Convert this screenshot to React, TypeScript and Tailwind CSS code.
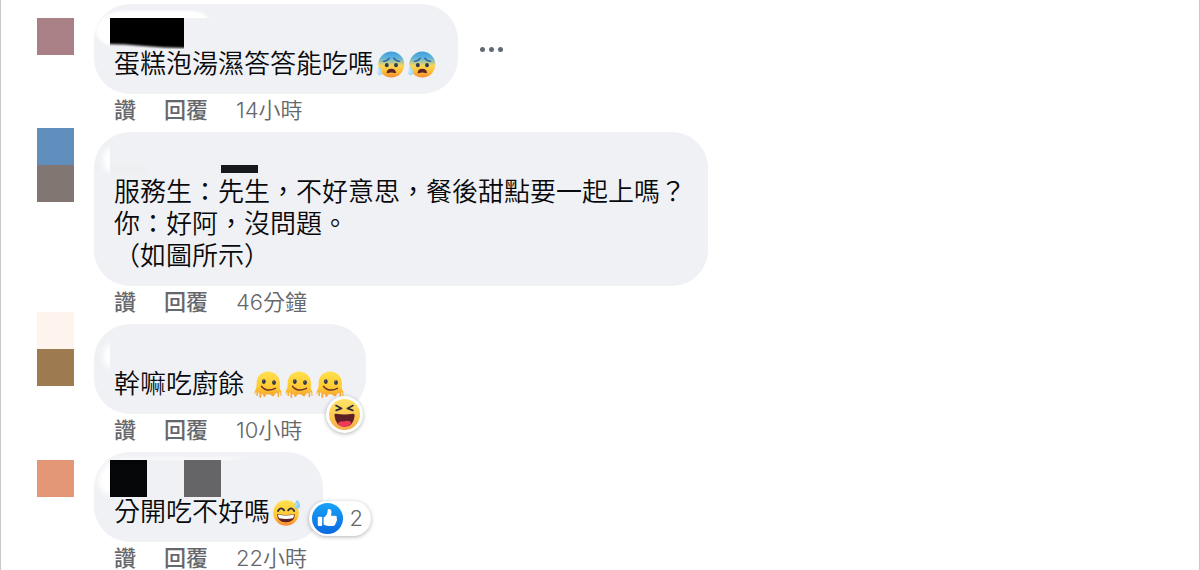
import type { ReactNode } from 'react'

function AnxiousFace() {
  return (
    <svg className="ml-[3px] inline-block h-7 w-7 align-[-6px]" viewBox="0 0 28 28" role="img" aria-label="😰">
      <defs>
        <linearGradient id="anxious" x1="0" y1="0" x2="0" y2="1">
          <stop offset="0" stopColor="#3f9edb" />
          <stop offset="0.25" stopColor="#5fb4dc" />
          <stop offset="0.54" stopColor="#f7d55b" />
          <stop offset="0.75" stopColor="#ffc233" />
          <stop offset="1" stopColor="#f58a3a" />
        </linearGradient>
      </defs>
      <circle cx="14.3" cy="13.6" r="13" fill="url(#anxious)" />
      <path d="M6.4 10.4Q10.4 10 12.2 7.2M16.8 7.2Q18.6 10 22.6 10.4" fill="none" stroke="#2668a8" strokeWidth="1.4" strokeLinecap="round" />
      <ellipse cx="9.8" cy="14.2" rx="1.9" ry="2.1" fill="#2d3a50" />
      <ellipse cx="19" cy="14.2" rx="1.9" ry="2.1" fill="#2d3a50" />
      <path d="M9.6 21.6Q10 17.8 14.3 17.8T19 21.6Q18.6 22.6 17.4 22Q14.3 20.8 11.2 22Q10 22.6 9.6 21.6Z" fill="#5e2126" />
      <path d="M2.4 15.2Q5.4 19 5.3 21.6Q5 24.4 2.7 24.4Q0.2 24.3 0.2 21.6Q0.4 19 2.4 15.2Z" fill="#a9dcf8" />
      <path d="M2.2 18.6Q1.2 20.6 1.4 22" fill="none" stroke="#e4f5ff" strokeWidth="0.9" />
    </svg>
  )
}

function MeltingFace() {
  return (
    <svg className="ml-[3px] inline-block h-7 w-7 align-[-6px]" viewBox="0 0 28 28" role="img" aria-label="🫠">
      <defs>
        <linearGradient id="melting" x1="0" y1="0" x2="0" y2="1">
          <stop offset="0" stopColor="#ffe04d" />
          <stop offset="0.6" stopColor="#ffc933" />
          <stop offset="1" stopColor="#f59a30" />
        </linearGradient>
      </defs>
      <path
        d="M14.2 0.6C21.2 0.6 26 5.8 26 12.4C26 15.4 25.4 17 26.2 18.4C27.4 20 27.6 20.8 27.4 24.4Q27 25.4 26.4 24.4V21.6Q25.8 20.8 25.2 21.6V25.6Q24.4 27 23.6 25.6V22.6Q22.6 21.6 21.6 22.4Q20.8 22.8 20.6 24Q20 25.6 18.4 25.2Q17.2 24.8 16.6 23.8Q14.6 22.8 12.6 23.4Q11.6 23.8 11.4 25.2Q10.4 26.6 9.4 25.2Q9.2 23.4 8.4 23Q7.4 22.6 7.2 23.8V26.2Q6.4 27.6 5.4 26.2V22.2Q4.6 21 4 22V24.4Q3.2 25.6 2.4 24.4V21.4Q1.8 20.6 1.5 21.6V22.8Q1 23.6 0.5 22.6C0.4 19.6 2.6 18 2.6 14.6V12C2.6 5.6 7.4 0.6 14.2 0.6Z"
        fill="url(#melting)"
      />
      <ellipse cx="9.8" cy="10.6" rx="1.9" ry="2.4" fill="#2d3546" />
      <ellipse cx="20" cy="11.6" rx="1.9" ry="2.4" fill="#2d3546" />
      <circle cx="9.4" cy="9.8" r="0.6" fill="#7d8798" />
      <circle cx="19.6" cy="10.8" r="0.6" fill="#7d8798" />
      <path d="M7.6 15.4Q13 21.6 21.4 17.4" fill="none" stroke="#6b3327" strokeWidth="1.5" strokeLinecap="round" />
    </svg>
  )
}

function SweatSmile() {
  return (
    <svg className="ml-[3px] inline-block h-7 w-7 align-[-6px]" viewBox="0 0 28 28" role="img" aria-label="😅">
      <defs>
        <linearGradient id="sweat" x1="0" y1="0" x2="0" y2="1">
          <stop offset="0" stopColor="#ffe04d" />
          <stop offset="0.6" stopColor="#ffc934" />
          <stop offset="1" stopColor="#f58a35" />
        </linearGradient>
      </defs>
      <circle cx="13" cy="14" r="12.8" fill="url(#sweat)" />
      <path d="M5 12Q7.8 7 11.2 11.4M15.2 11.4Q18.4 7 21.2 12" fill="none" stroke="#34313a" strokeWidth="1.8" strokeLinecap="round" />
      <path d="M4.2 15Q13 17 21.8 15Q21.8 23.2 13 23.2T4.2 15Z" fill="#5e2126" />
      <path d="M5 15.4Q13 17.4 21 15.4Q20.8 18.6 19.8 19.2Q13 20.6 6.2 19.2Q5.2 18.6 5 15.4Z" fill="#fff" />
      <path d="M24.2 0.8Q27.4 5 27.2 7.2Q26.8 9.8 24.2 9.8Q21.4 9.6 21.4 7Q21.6 4.6 24.2 0.8Z" fill="#8fcff0" />
      <path d="M23.8 4.4Q22.4 6.4 22.8 7.8" fill="none" stroke="#daf2ff" strokeWidth="0.9" />
    </svg>
  )
}

function HahaIcon() {
  return (
    <svg className="size-[31px]" viewBox="0 0 31 31" aria-hidden="true">
      <defs>
        <linearGradient id="haha" x1="0" y1="0" x2="0" y2="1">
          <stop offset="0" stopColor="#ffe368" />
          <stop offset="0.55" stopColor="#fdc94f" />
          <stop offset="1" stopColor="#f7a94a" />
        </linearGradient>
      </defs>
      <circle cx="15.5" cy="15.5" r="15.5" fill="url(#haha)" />
      <path d="M7 6.6L12.6 9.4L7.2 11.4M24 6.6L18.4 9.4L23.8 11.4" fill="none" stroke="#2c2f3d" strokeWidth="1.7" strokeLinecap="round" strokeLinejoin="round" />
      <path d="M5.4 16Q5.4 14.6 7 14.8Q15.5 16.4 24 14.8Q25.8 14.6 25.7 16.4Q24.6 27.8 15.6 27.8T5.4 16Z" fill="#5d1f26" />
      <path d="M8.6 24.4Q11.4 21.4 14.8 22.6Q19.6 20.6 22.6 24Q19.8 27.8 15.6 27.8Q11.2 27.8 8.6 24.4Z" fill="#f0385a" />
    </svg>
  )
}

function LikeIcon() {
  return (
    <svg className="size-[31px]" viewBox="0 0 31 31" aria-hidden="true">
      <defs>
        <linearGradient id="like" x1="0" y1="0" x2="0" y2="1">
          <stop offset="0" stopColor="#18a3f8" />
          <stop offset="1" stopColor="#0a68e0" />
        </linearGradient>
      </defs>
      <circle cx="15.5" cy="15.5" r="15.5" fill="url(#like)" />
      <rect x="5.8" y="13.8" width="4.4" height="9.2" rx="1" fill="#fff" />
      <path
        d="M11.6 14.6C13.8 13 15.5 11 15.6 8.4C15.4 6.4 16.2 5.8 17.2 5.9C19.2 6.2 19.8 8.4 19.4 10.4C19.2 11.6 18.9 12.2 18.9 12.8H23C24.6 12.8 25.4 14.2 24.6 15.4C25.4 16.2 25.2 17.6 24.2 18.2C24.6 19.2 24.2 20.2 23.3 20.6C23.5 22 22.6 23 21 23H16.6C14.4 23 13 22.4 11.6 21.6Z"
        fill="#fff"
      />
    </svg>
  )
}

interface CommentProps {
  avatar: ReactNode
  time: string
  mask: ReactNode
  badge?: ReactNode
  menu?: boolean
  children: ReactNode
}

function Comment({ avatar, time, mask, badge, menu = false, children }: CommentProps) {
  return (
    <article className="flex items-start gap-5 pb-2 last:pb-0">
      <div className="w-[37px] shrink-0">{avatar}</div>
      <div className="min-w-0">
        <div className="flex items-center gap-[22px]">
          <div className="relative rounded-[36px] bg-[#f0f1f5] pt-3 pr-[22px] pb-3.5 pl-5">
            <svg className="absolute top-0 left-0 h-12 w-44" viewBox="0 0 176 48" aria-hidden="true">
              {mask}
            </svg>
            <div className="h-8" />
            <p className="relative text-[26px] leading-8 font-[350] text-[#08090b]">{children}</p>
            {badge}
          </div>
          {menu && (
            <button type="button" aria-label="更多" className="flex gap-1">
              <span className="size-[5px] rounded-full bg-[#606a74]" />
              <span className="size-[5px] rounded-full bg-[#606a74]" />
              <span className="size-[5px] rounded-full bg-[#606a74]" />
            </button>
          )}
        </div>
        <div className="flex gap-7 pt-0.5 pl-5 font-['Inter','Noto_Sans_CJK_TC',sans-serif] text-[22px] leading-7 text-[#65676b]">
          <button type="button" className="font-medium">讚</button>
          <button type="button" className="font-medium">回覆</button>
          <a href="#" className="font-[350]">{time}</a>
        </div>
      </div>
    </article>
  )
}

export default function App() {
  return (
    <main
      lang="zh-TW"
      className="h-screen overflow-hidden border-x border-[#c9c9cb] bg-white pt-1 pl-9 font-['Liberation_Sans','Noto_Sans_CJK_TC',sans-serif]"
    >
      {/* soft edge used by the painted-over names */}
      <svg className="absolute size-0" aria-hidden="true">
        <filter id="soft" x="-30%" y="-30%" width="160%" height="160%">
          <feGaussianBlur stdDeviation="1.2" />
        </filter>
        <filter id="softer" x="-60%" y="-60%" width="220%" height="220%">
          <feGaussianBlur stdDeviation="2.5" />
        </filter>
        <clipPath id="left-strip">
          <rect width="16" height="48" />
        </clipPath>
        <clipPath id="top-strip">
          <path d="M0 0H176V14H16V48H0Z" />
        </clipPath>
        <clipPath id="thin-strip">
          <path d="M0 0H176V8H16V48H0Z" />
        </clipPath>
        <clipPath id="name-block">
          <rect x="16" y="14" width="74" height="31" />
        </clipPath>
      </svg>

      <Comment
        time="14小時"
        menu
        avatar={<div className="mt-3.5 h-[37px] bg-[#a98085]" />}
        mask={
          <>
            <g clipPath="url(#top-strip)">
              <path d="M18 42Q2 38 2 26Q6 8 30 7H100Q112 9 115 16H18Z" fill="#fff" filter="url(#soft)" />
            </g>
            <g clipPath="url(#name-block)">
              <path d="M10 4H96V44Q70 44 50 42Q30 40 10 40Z" fill="#030304" filter="url(#soft)" />
            </g>
          </>
        }
      >
        蛋糕泡湯濕答答能吃嗎<AnxiousFace /><AnxiousFace />
      </Comment>

      <Comment
        time="46分鐘"
        avatar={
          <div className="-mt-1">
            <div className="h-[37px] bg-[#608fbd]" />
            <div className="h-[37px] bg-[#817671]" />
          </div>
        }
        mask={
          <>
            <g clipPath="url(#left-strip)">
              <ellipse cx="16" cy="28" rx="7" ry="12" fill="#fff" filter="url(#softer)" />
            </g>
            <rect x="16" y="33" width="37" height="9" fill="#eeeff1" />
            <rect x="127" y="33" width="37" height="8" fill="#17181b" />
          </>
        }
      >
        服務生：先生，不好意思，餐後甜點要一起上嗎？
        <br />
        你：好阿，沒問題。
        <br />
        （如圖所示）
      </Comment>

      <Comment
        time="10小時"
        avatar={
          <div className="-mt-3">
            <div className="h-[37px] bg-[#fff3ed]" />
            <div className="h-[37px] bg-[#9d7a50]" />
          </div>
        }
        mask={
          <g clipPath="url(#left-strip)">
            <ellipse cx="16" cy="32" rx="7" ry="12" fill="#fff" filter="url(#softer)" />
          </g>
        }
        badge={
          <button
            type="button"
            aria-label="哈"
            className="absolute right-[3px] -bottom-[19px] rounded-full bg-white p-[3px] shadow-[0_1px_4px_rgba(0,0,0,0.3)]"
          >
            <HahaIcon />
          </button>
        }
      >
        幹嘛吃廚餘 <MeltingFace /><MeltingFace /><MeltingFace />
      </Comment>

      <Comment
        time="22小時"
        avatar={<div className="mt-2 h-[37px] bg-[#e49777]" />}
        mask={
          <>
            <g clipPath="url(#thin-strip)">
              <path d="M18 44Q4 40 4 28Q8 8 30 6H140L156 9H18Z" fill="#fff" filter="url(#softer)" />
            </g>
            <rect x="16" y="8" width="37" height="37" fill="#040608" />
            <rect x="90" y="8" width="37" height="37" fill="#656567" />
          </>
        }
        badge={
          <button
            type="button"
            aria-label="2 個讚"
            className="absolute -right-12 bottom-1.5 flex items-center gap-[7px] rounded-full bg-white py-0.5 pr-2 pl-[3px] font-['Inter',sans-serif] text-[22px] leading-[31px] font-[350] text-[#65676b] shadow-[0_1px_4px_rgba(0,0,0,0.3)]"
          >
            <LikeIcon />
            2
          </button>
        }
      >
        分開吃不好嗎<SweatSmile />
      </Comment>
    </main>
  )
}
